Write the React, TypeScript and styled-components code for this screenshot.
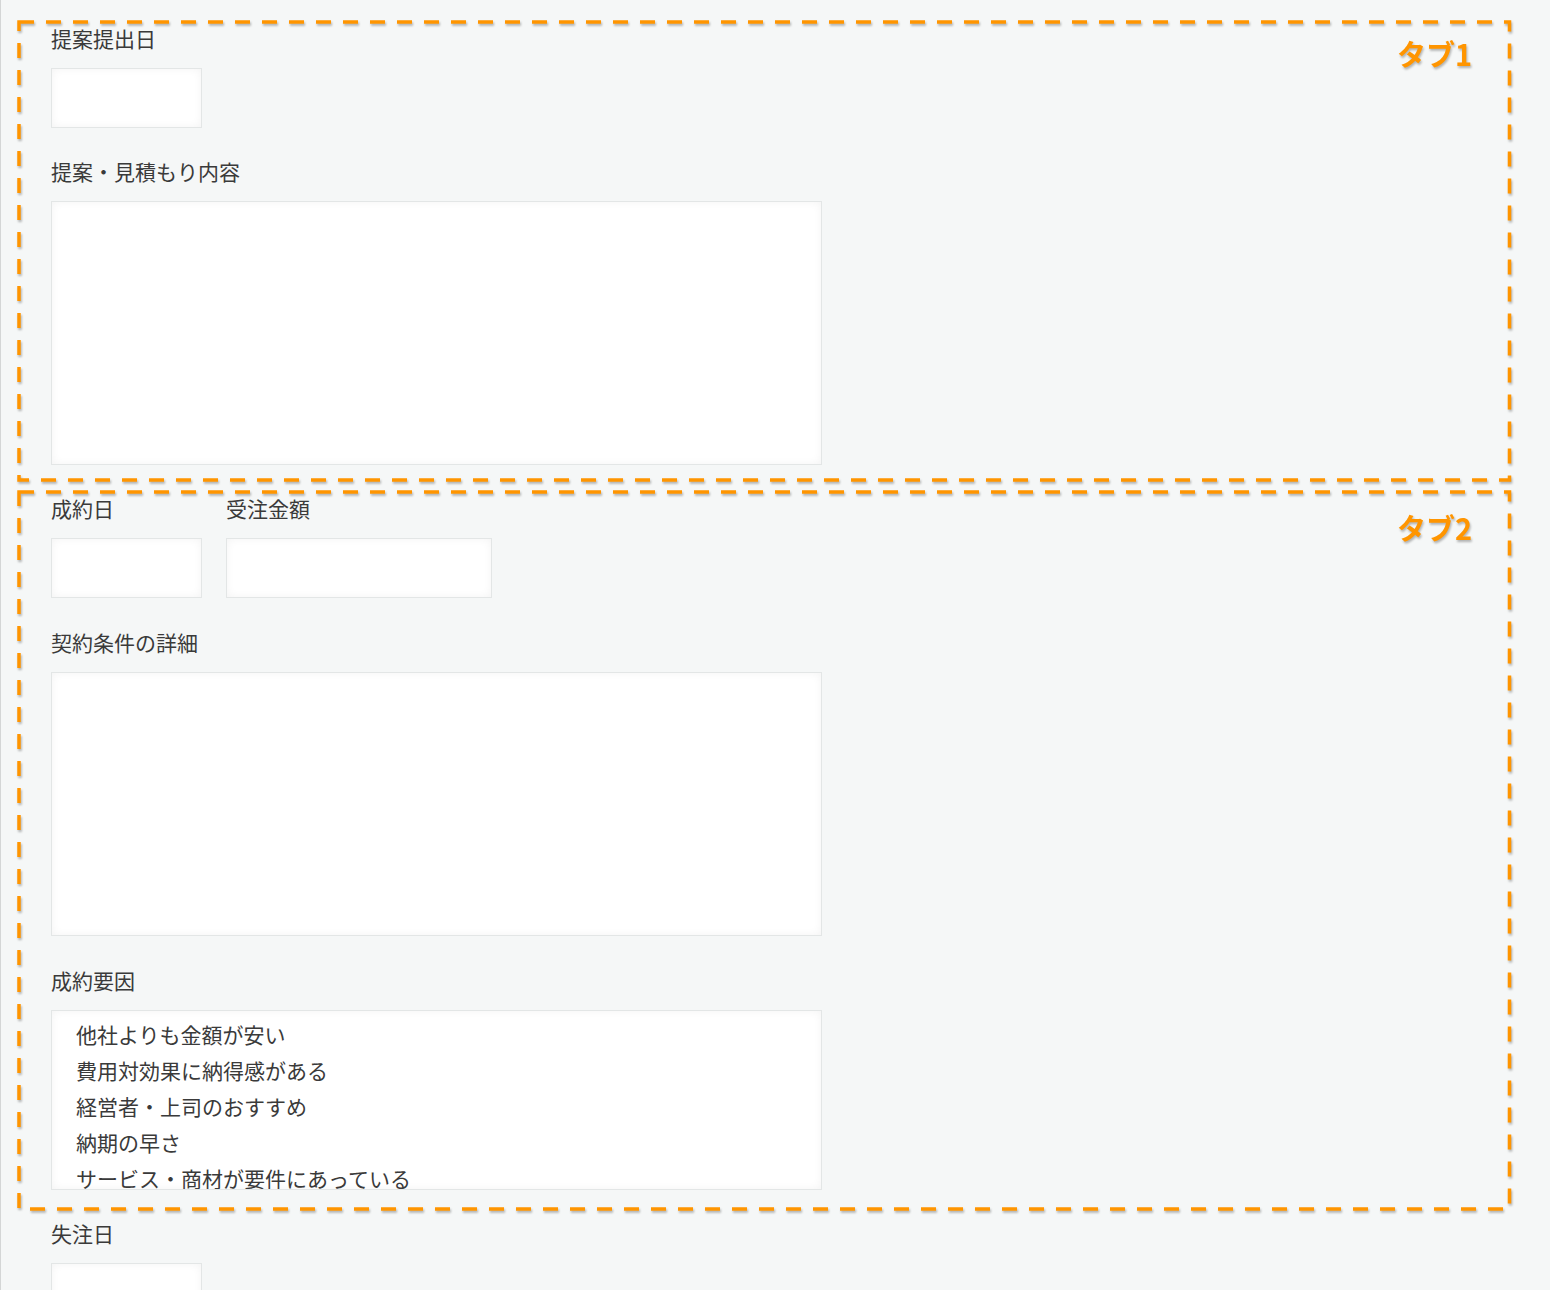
import React from "react";
import styled, { createGlobalStyle } from "styled-components";

const GlobalStyle = createGlobalStyle`
  html, body {
    margin: 0;
    padding: 0;
    background: #f5f7f7;
  }
  * {
    box-sizing: border-box;
  }
  body {
    font-family: "Noto Sans CJK JP", "Noto Sans", sans-serif;
    color: #333;
  }
`;

const reasons = [
  "他社よりも金額が安い",
  "費用対効果に納得感がある",
  "経営者・上司のおすすめ",
  "納期の早さ",
  "サービス・商材が要件にあっている",
];

type Inset = { $top: number; $bottom: number };

const Annotation = ({ label, top, bottom, labelTop }: { label: string; top: number; bottom: number; labelTop: number }) => (
  <Overlay $top={top} $bottom={bottom}>
    <svg width="100%" height="100%">
      <rect
        x="0"
        y="0"
        width="100%"
        height="100%"
        fill="none"
        stroke="#ff9500"
        strokeWidth="3.5"
        strokeDasharray="15 12"
      />
    </svg>
    <TabName $top={labelTop}>{label}</TabName>
  </Overlay>
);

const App = () => {
  return (
    <>
      <GlobalStyle />
      <Page>
        {/* タブ1 */}
        <Section $gap={31}>
          <Field>
            <Label>提案提出日</Label>
            <DateInput type="text" />
          </Field>
          <Field>
            <Label>提案・見積もり内容</Label>
            <TextArea />
          </Field>
          <Annotation label="タブ1" top={-4.5} bottom={-14.5} labelTop={17} />
        </Section>

        {/* タブ2 */}
        <Section $gap={32}>
          <Row>
            <Field>
              <Label>成約日</Label>
              <DateInput type="text" />
            </Field>
            <Field>
              <Label>受注金額</Label>
              <AmountInput type="text" />
            </Field>
          </Row>
          <Field>
            <Label>契約条件の詳細</Label>
            <TextArea />
          </Field>
          <Field>
            <Label>成約要因</Label>
            <ListBox role="listbox">
              {reasons.map((r) => (
                <ListItem key={r} role="option">
                  {r}
                </ListItem>
              ))}
            </ListBox>
          </Field>
          <Annotation label="タブ2" top={-4.5} bottom={-18.5} labelTop={21} />
        </Section>

        <Field>
          <Label>失注日</Label>
          <DateInput type="text" />
        </Field>
      </Page>
    </>
  );
};

export default App;

const Page = styled.div`
  display: flex;
  flex-direction: column;
  gap: 31px;
  width: 1550px;
  height: 1290px;
  overflow: hidden;
  padding: 26px 0 0 50px;
  border-left: 1px solid #d4d6d6;
`;

const Section = styled.section<{ $gap: number }>`
  position: relative;
  display: flex;
  flex-direction: column;
  gap: ${(p) => p.$gap}px;
`;

const Row = styled.div`
  display: flex;
  gap: 24px;
`;

const Field = styled.div`
  display: flex;
  flex-direction: column;
  align-items: flex-start;
`;

const Label = styled.label`
  font-size: 21px;
  line-height: 24px;
  margin-bottom: 18px;
  color: #3a3a3a;
`;

const controlBase = `
  border: 1px solid #e3e6e6;
  background: #fff;
  box-shadow: inset 0 0 8px rgba(0, 0, 0, 0.05);
  outline: none;
  font-family: "Noto Sans CJK JP", sans-serif;
  font-size: 20px;
  color: #333;
`;

const DateInput = styled.input`
  ${controlBase}
  width: 151px;
  height: 60px;
`;

const AmountInput = styled.input`
  ${controlBase}
  width: 266px;
  height: 60px;
`;

const TextArea = styled.textarea`
  ${controlBase}
  display: block;
  width: 771px;
  height: 264px;
  resize: none;
`;

const ListBox = styled.div`
  ${controlBase}
  width: 771px;
  height: 180px;
  overflow: hidden;
  padding: 5px 0 0 24px;
`;

const ListItem = styled.div`
  font-size: 21px;
  line-height: 36px;
  color: #3a3a3a;
  white-space: nowrap;
`;

const Overlay = styled.div<Inset>`
  position: absolute;
  left: -32px;
  right: 40.5px;
  top: ${(p) => p.$top}px;
  bottom: ${(p) => p.$bottom}px;
  pointer-events: none;
  filter: drop-shadow(1px 2px 1px rgba(0, 0, 0, 0.28));

  svg {
    display: block;
    overflow: visible;
  }
`;

const TabName = styled.span<{ $top: number }>`
  position: absolute;
  left: 1378px;
  top: ${(p) => p.$top}px;
  font-family: "Noto Sans CJK JP", sans-serif;
  font-weight: 700;
  font-size: 29px;
  line-height: 1;
  color: #ff9500;
  letter-spacing: 0;
`;
